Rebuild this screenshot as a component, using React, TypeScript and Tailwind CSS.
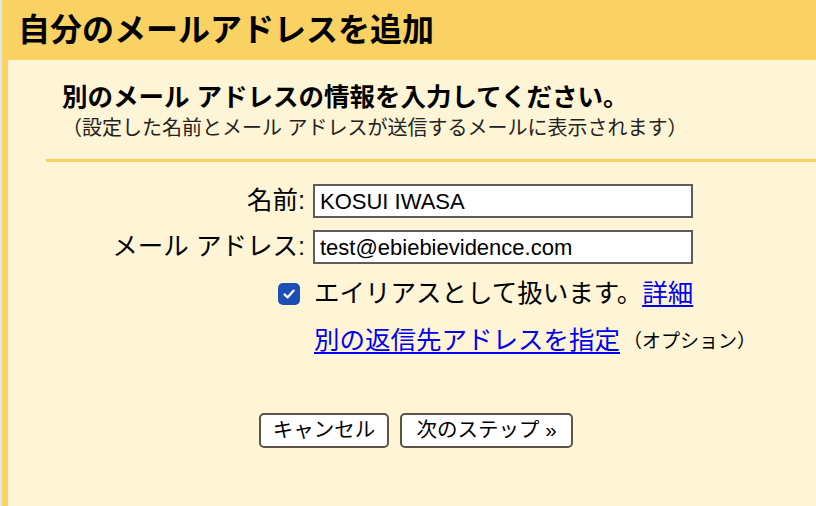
export default function App() {
  const font = { fontFamily: '"Liberation Sans", "Noto Sans CJK JP", sans-serif' };

  return (
    <div className="w-[816px] h-[506px] overflow-hidden bg-[#dfe6ea] pl-[2px] text-black" style={font}>
      <div className="h-full flex flex-col bg-[#fef4d6]">
        <div className="h-[60px] shrink-0 bg-[#fad264] pl-[16px] flex items-center">
          <h1 className="text-[32px] font-bold leading-none">自分のメールアドレスを追加</h1>
        </div>
        <div className="flex-1 border-l-[6px] border-[#fad264] flex flex-col">
          <div className="ml-[54px] mt-[22px] text-[25.5px] font-bold leading-[30px] whitespace-nowrap">
            別のメール アドレスの情報を入力してください。
          </div>
          <div className="ml-[54px] mt-[4px] text-[20px] leading-[24px] text-[#222] whitespace-nowrap">
            （設定した名前とメール アドレスが送信するメールに表示されます）
          </div>
          <div className="ml-[38px] mt-[19px] h-[3px] bg-[#f9d063]" />

          <div className="mt-[22px] flex items-center h-[34px]">
            <label className="w-[298px] pr-[1px] text-right text-[25.5px] leading-none whitespace-nowrap">名前:</label>
            <div className="ml-[7px] w-[380px] h-[34px] border-2 border-[#5c5c5c] bg-white px-[5px] flex items-center text-[22px]">
              KOSUI IWASA
            </div>
          </div>
          <div className="mt-[12px] flex items-center h-[34px]">
            <label className="w-[298px] pr-[1px] text-right text-[25.5px] leading-none whitespace-nowrap">メール アドレス:</label>
            <div className="ml-[7px] w-[380px] h-[34px] border-2 border-[#5c5c5c] bg-white px-[5px] flex items-center text-[22px]">
              test@ebiebievidence.com
            </div>
          </div>

          <div className="mt-[13px] flex items-center h-[34px]">
            <div className="w-[298px] flex justify-end pr-[6px]">
              <div className="w-[22px] h-[22px] rounded-[5px] bg-[#1b4fb5] flex items-center justify-center">
                <svg width="14" height="14" viewBox="0 0 14 14" fill="none">
                  <path d="M2.5 7.4 L5.6 10.4 L11.6 3.6" stroke="white" strokeWidth="2.2" strokeLinecap="round" strokeLinejoin="round" />
                </svg>
              </div>
            </div>
            <div className="ml-[8px] text-[25.5px] leading-none whitespace-nowrap">
              エイリアスとして扱います。
              <a className="text-[#0000ee] underline underline-offset-[3px]">詳細</a>
            </div>
          </div>

          <div className="mt-[15px] flex items-center h-[30px] pl-[306px] whitespace-nowrap">
            <a className="text-[25.5px] leading-none text-[#0000ee] underline underline-offset-[3px]">別の返信先アドレスを指定</a>
            <span className="ml-[3px] text-[19px] leading-none">（オプション）</span>
          </div>

          <div className="mt-[57px] ml-[251px] flex gap-[11px]">
            <button className="w-[130px] h-[35px] rounded-[5px] border-2 border-[#5a5446] bg-white text-[20.5px] leading-none">
              キャンセル
            </button>
            <button className="w-[173px] h-[35px] rounded-[5px] border-2 border-[#5a5446] bg-white text-[20.5px] leading-none">
              次のステップ »
            </button>
          </div>
        </div>
      </div>
    </div>
  );
}
